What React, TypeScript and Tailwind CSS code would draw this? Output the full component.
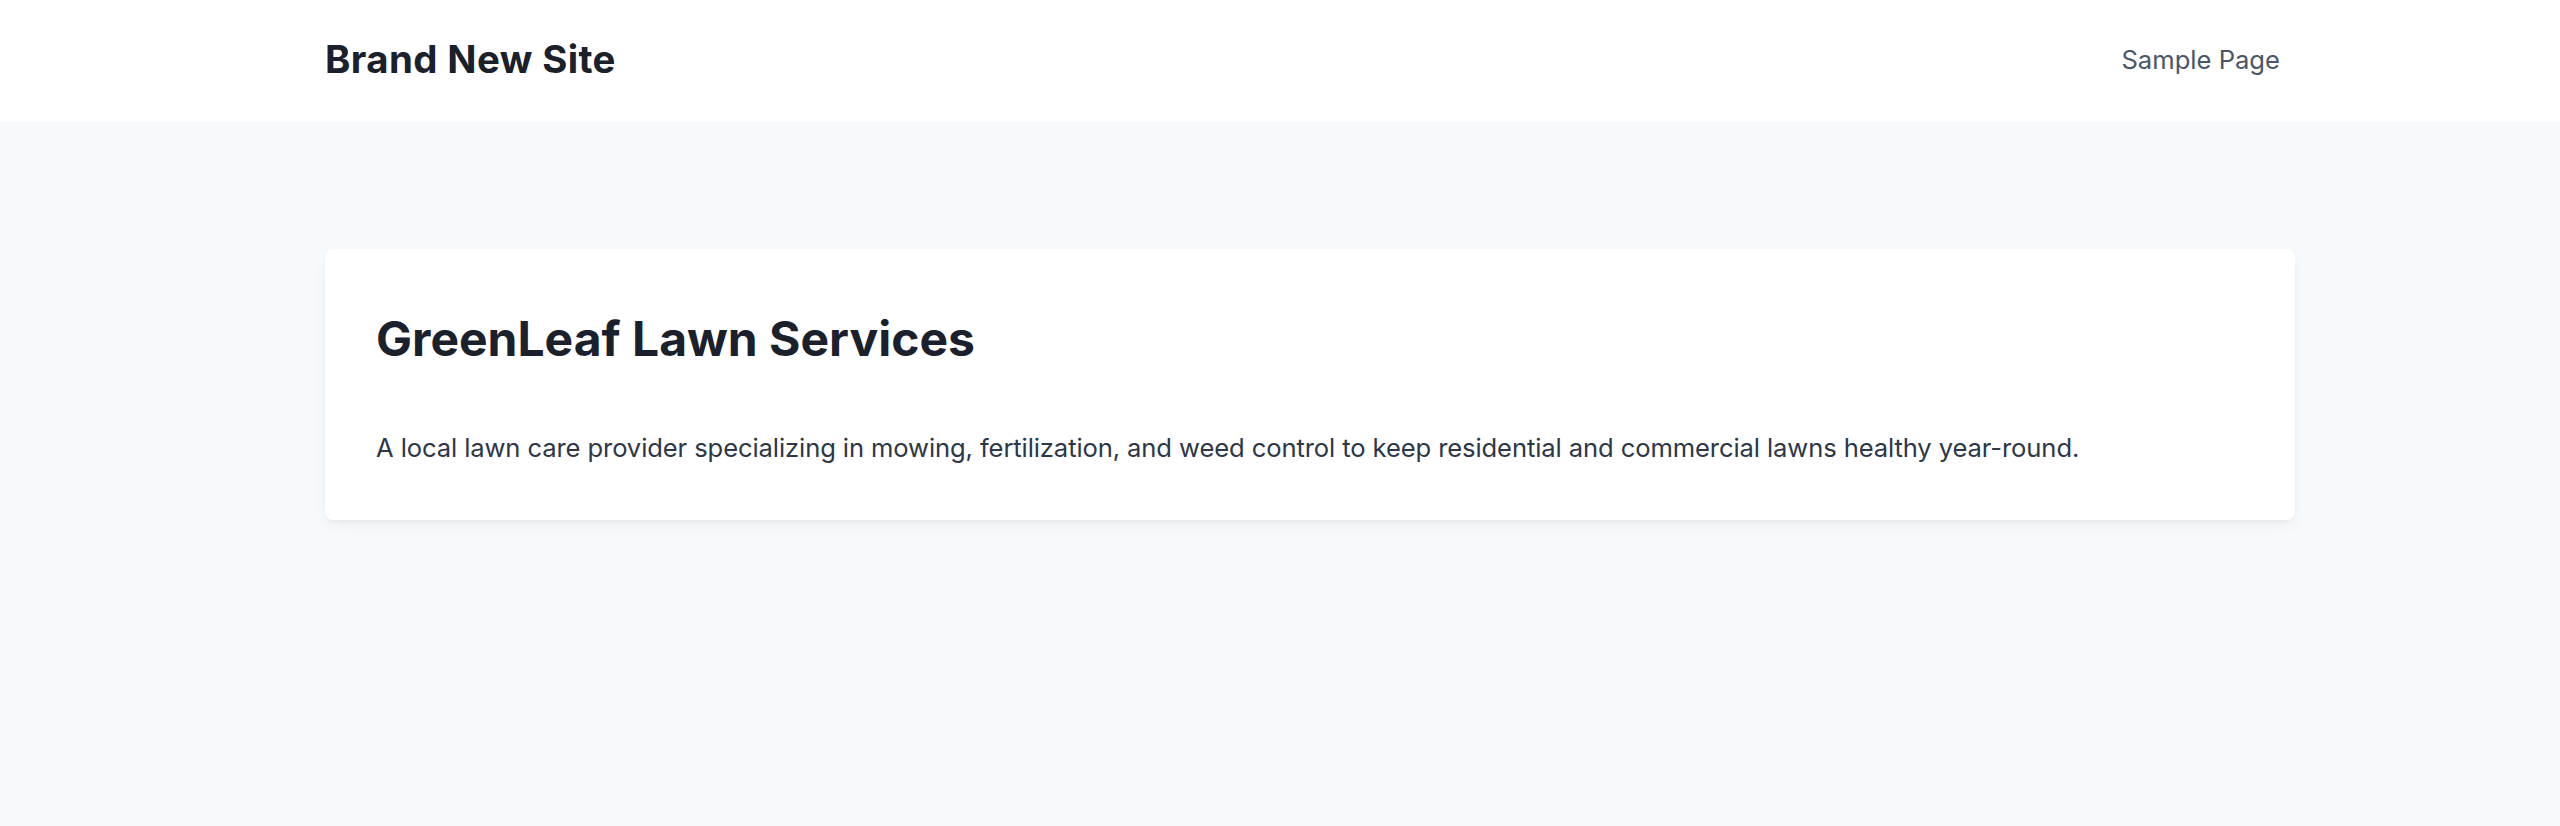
export default function App() {
  return (
    <div className="min-h-screen bg-[#f7fafc] font-['Inter',sans-serif]">
      {/* Top bar */}
      <header className="bg-white">
        <div className="flex h-[122px] items-center justify-between pb-1 pl-[325px] pr-[265px]">
          <a href="#" className="text-[38.4px] font-bold leading-none tracking-[0.01em] text-[#1a202c]">
            Brand New Site
          </a>
          <nav>
            <a href="#" className="block px-[15px] pt-[2px] text-[25.6px] leading-none text-[#4a5568]">
              Sample Page
            </a>
          </nav>
        </div>
      </header>

      <main className="pl-[325px] pr-[265px] pt-[127px] pb-[128px]">
        <article className="rounded-[8px] bg-white px-[51px] pt-[61px] pb-[53px] shadow-[0_6px_16px_-4px_rgba(0,0,0,0.08),0_2px_6px_-2px_rgba(0,0,0,0.05)]">
          <h1 className="text-[48px] font-bold leading-[58px] text-[#1a202c]">
            GreenLeaf Lawn Services
          </h1>
          <p className="mt-[61px] text-[25.6px] leading-[38px] tracking-[-0.11px] text-[#2d3748]">
            A local lawn care provider specializing in mowing, fertilization, and weed control to keep residential and commercial lawns healthy year-round.
          </p>
        </article>
      </main>
    </div>
  );
}
